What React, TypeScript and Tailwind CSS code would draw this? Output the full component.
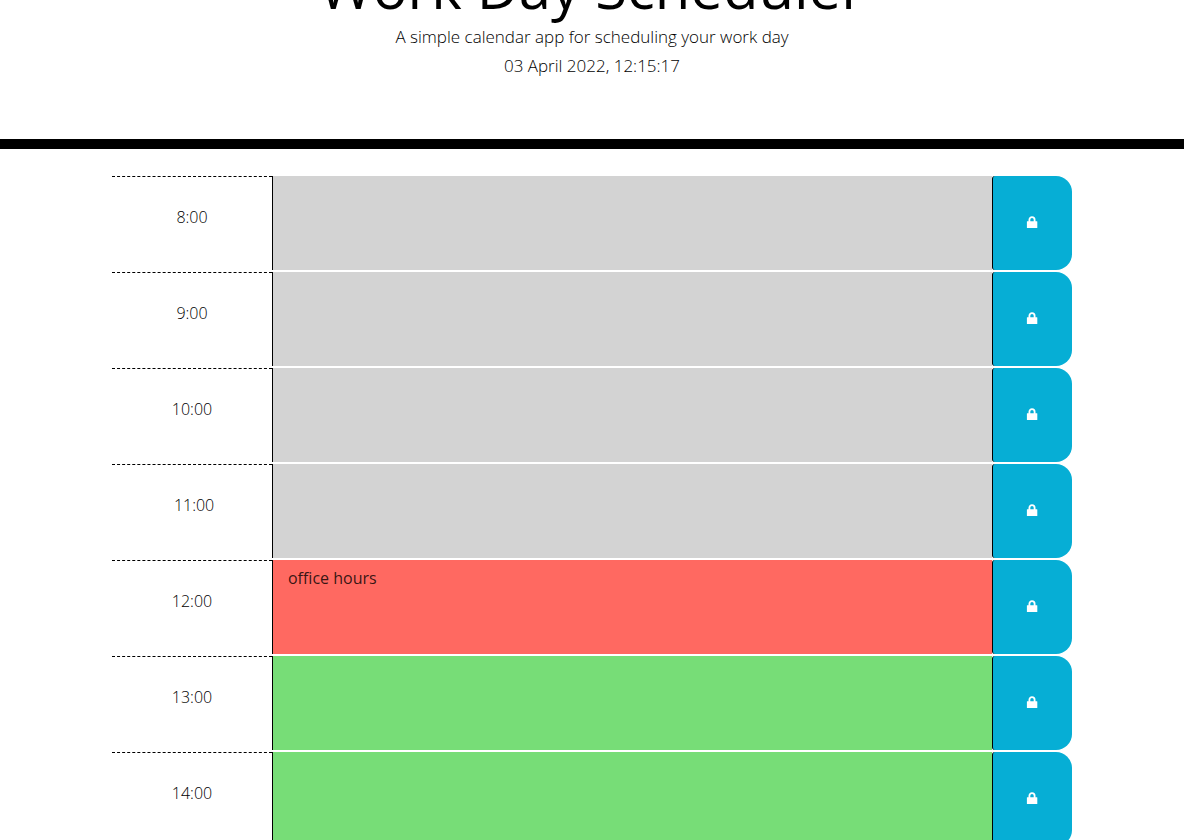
import { useState } from "react";

type Phase = "past" | "present" | "future";

interface Slot {
  hour: string;
  phase: Phase;
  note: string;
}

const slots: Slot[] = [
  { hour: "8:00", phase: "past", note: "" },
  { hour: "9:00", phase: "past", note: "" },
  { hour: "10:00", phase: "past", note: "" },
  { hour: "\u00a011:00", phase: "past", note: "" },
  { hour: "12:00", phase: "present", note: "office hours" },
  { hour: "13:00", phase: "future", note: "" },
  { hour: "14:00", phase: "future", note: "" },
];

const phaseColors: Record<Phase, string> = {
  past: "bg-[#d3d3d3]",
  present: "bg-[#ff6961]",
  future: "bg-[#77dd77]",
};

function LockIcon() {
  return (
    <svg viewBox="0 0 12 14" className="h-3.5 w-3" fill="none" aria-hidden="true">
      <path d="M3.4 6V3.8a2.6 2.6 0 0 1 5.2 0V6" stroke="white" strokeWidth="1.8" />
      <rect x="0.9" y="5.2" width="10.4" height="6.9" rx="0.4" fill="white" />
    </svg>
  );
}

function TimeBlock({ slot }: { slot: Slot }) {
  const [note, setNote] = useState(slot.note);
  const id = `slot-${slot.hour.trim()}`;
  return (
    <div className="flex h-24 pb-0.5">
      <label
        htmlFor={id}
        className="w-1/6 border-t border-dashed border-black pt-7 text-center leading-6 font-light"
      >
        {slot.hour}
      </label>
      <textarea
        id={id}
        value={note}
        onChange={(event) => setNote(event.target.value)}
        className={`w-3/4 resize-none border-l border-black px-[15px] py-1.5 leading-6 text-black/80 outline-none ${phaseColors[slot.phase]}`}
      />
      <button
        type="button"
        aria-label={`Save ${slot.hour.trim()}`}
        className="flex w-1/12 items-center justify-center rounded-l-[3px] rounded-r-2xl border-l border-black bg-[#06aed5] hover:bg-[#0592b3]"
      >
        <LockIcon />
      </button>
    </div>
  );
}

export default function App() {
  return (
    <div className="h-screen overflow-hidden bg-white font-['Open_Sans',sans-serif] text-base text-black">
      <header className="-mt-13 border-b-10 border-black pb-[61px] text-center">
        <h1 className="text-[58px] leading-[77px] font-normal">Work Day Scheduler</h1>
        <p className="mb-[5px] text-[17px] leading-6 font-light">
          A simple calendar app for scheduling your work day
        </p>
        <p className="text-[17px] leading-6 font-light">03 April 2022, 12:15:17</p>
      </header>
      <main className="mx-auto mt-[27px] max-w-[960px]">
        {slots.map((slot) => (
          <TimeBlock key={slot.hour} slot={slot} />
        ))}
      </main>
    </div>
  );
}
